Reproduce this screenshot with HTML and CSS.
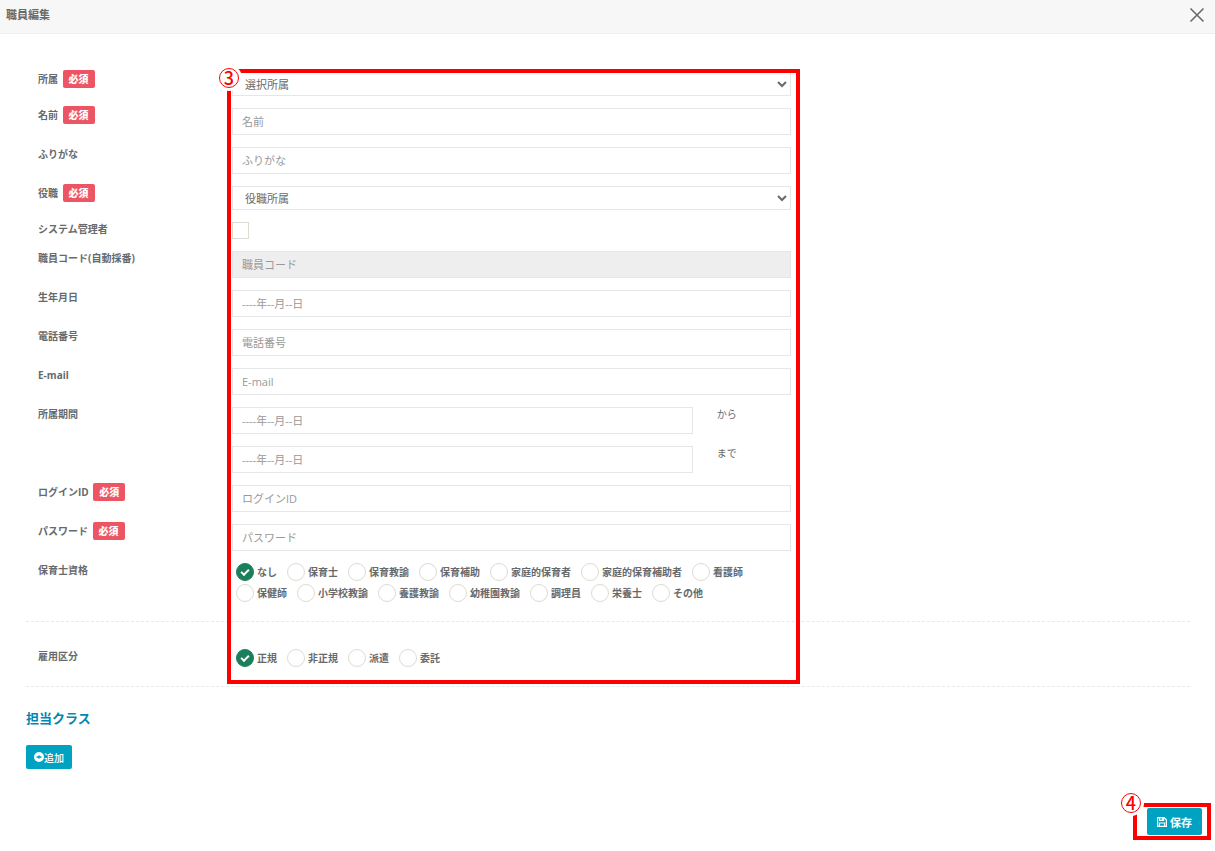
FILE: index.html
```html
<!DOCTYPE html>
<html lang="ja">
<head>
    <meta charset="UTF-8">
    <meta name="viewport" content="width=device-width, initial-scale=1.0">
    <title>職員編集</title>
    <link rel="stylesheet" href="styles.css">
</head>
<body>
    <header class="modal-header">
        <h1>職員編集</h1>
        <button type="button" class="close" aria-label="閉じる">
            <svg width="16" height="16" viewBox="0 0 16 16"><path d="M1.5 1.5l13 13M14.5 1.5l-13 13" fill="none" stroke="currentColor" stroke-width="1.6"/></svg>
        </button>
    </header>

    <form class="modal-body">
        <div class="form-grid">
            <label class="name" for="office">所属 <span class="required">必須</span></label>
            <select class="field" id="office"><option>選択所属</option></select>

            <label class="name" for="name">名前 <span class="required">必須</span></label>
            <input class="field" type="text" id="name" placeholder="名前">

            <label class="name" for="kana">ふりがな</label>
            <input class="field" type="text" id="kana" placeholder="ふりがな">

            <label class="name" for="position">役職 <span class="required">必須</span></label>
            <select class="field" id="position"><option>役職所属</option></select>

            <label class="name" for="admin">システム管理者</label>
            <input class="check" type="checkbox" id="admin">

            <label class="name" for="code">職員コード(自動採番)</label>
            <input class="field" type="text" id="code" placeholder="職員コード" disabled>

            <label class="name" for="birthday">生年月日</label>
            <input class="field" type="text" id="birthday" placeholder="----年--月--日">

            <label class="name" for="tel">電話番号</label>
            <input class="field" type="text" id="tel" placeholder="電話番号">

            <label class="name" for="email">E-mail</label>
            <input class="field" type="email" id="email" placeholder="E-mail">

            <label class="name" for="from">所属期間</label>
            <div class="period">
                <input class="field" type="text" id="from" placeholder="----年--月--日">
                <label for="from">から</label>
            </div>
            <div class="period">
                <input class="field" type="text" id="to" placeholder="----年--月--日">
                <label for="to">まで</label>
            </div>

            <label class="name" for="login">ログインID <span class="required">必須</span></label>
            <input class="field" type="text" id="login" placeholder="ログインID">

            <label class="name" for="password">パスワード <span class="required">必須</span></label>
            <input class="field" type="password" id="password" placeholder="パスワード">

            <span class="name" id="license-label">保育士資格</span>
            <div class="radios" role="radiogroup" aria-labelledby="license-label">
                <label><input type="radio" name="license" checked>なし</label>
                <label><input type="radio" name="license">保育士</label>
                <label><input type="radio" name="license">保育教諭</label>
                <label><input type="radio" name="license">保育補助</label>
                <label><input type="radio" name="license">家庭的保育者</label>
                <label><input type="radio" name="license">家庭的保育補助者</label>
                <label><input type="radio" name="license">看護師</label>
                <label><input type="radio" name="license">保健師</label>
                <label><input type="radio" name="license">小学校教諭</label>
                <label><input type="radio" name="license">養護教諭</label>
                <label><input type="radio" name="license">幼稚園教諭</label>
                <label><input type="radio" name="license">調理員</label>
                <label><input type="radio" name="license">栄養士</label>
                <label><input type="radio" name="license">その他</label>
            </div>

            <hr>

            <span class="name" id="contract-label">雇用区分</span>
            <div class="radios" role="radiogroup" aria-labelledby="contract-label">
                <label><input type="radio" name="contract" checked>正規</label>
                <label><input type="radio" name="contract">非正規</label>
                <label><input type="radio" name="contract">派遣</label>
                <label><input type="radio" name="contract">委託</label>
            </div>

            <!-- step 3 callout -->
            <div class="callout callout-form"><span class="step">3</span></div>
        </div>
        <hr>

        <h2>担当クラス</h2>
        <button type="button" class="btn btn-add">
            <svg width="10" height="10" viewBox="0 0 10 10"><circle cx="5" cy="5" r="5" fill="#fff"/><path d="M2.5 5h5M5 3.5v3" stroke="#00a2c2" stroke-width="1.6"/></svg>追加
        </button>

        <div class="actions">
            <div class="save">
                <button type="submit" class="btn btn-save">
                    <svg width="10" height="10" viewBox="0 0 10 10" fill="none" stroke="#fff" stroke-width="1.2"><path d="M.6.6h6.6l2.2 2.2v6.6H.6z"/><path d="M2.6.6v2.8h4V.6M2.4 9.4V6h5.2v3.4M5.4 1v1.6"/></svg>
                    保存
                </button>
                <!-- step 4 callout -->
                <div class="callout callout-save"><span class="step">4</span></div>
            </div>
        </div>
    </form>
</body>
</html>
```

FILE: styles.css
```css
* {
    box-sizing: border-box;
}
body {
    margin: 0;
    background: #fff;
    color: #676a6c;
    font-family: "Open Sans", "Noto Sans CJK JP", sans-serif;
    font-size: 10px;
    line-height: 14px;
}
.modal-header {
    display: flex;
    justify-content: space-between;
    align-items: center;
    height: 34px;
    padding: 0 10px 4px 6px;
    background: #f7f7f7;
    border-bottom: 1px solid #eee;
}
h1 {
    margin: 0;
    font-size: 11px;
    font-weight: 600;
}
.close {
    display: flex;
    padding: 0;
    border: none;
    background: none;
    color: #676a6c;
    cursor: pointer;
}
.modal-body {
    padding: 38px 25px 0 26px;
}
.form-grid {
    position: relative;
    display: grid;
    grid-template-columns: 206px minmax(0, 7fr) minmax(0, 5fr);
    row-gap: 12px;
    align-items: start;
}
.name {
    grid-column: 1;
    padding-left: 12px;
    font-weight: 700;
}
.required {
    margin-left: 2px;
    padding: 2px 6px;
    border-radius: 2px;
    background: #ed5565;
    color: #fff;
    font-weight: 900;
}
.form-grid > .field,
.check,
.period,
.radios {
    grid-column: 2;
}
.field {
    width: 100%;
    height: 27px;
    padding: 0 9px;
    border: 1px solid #e5e6e7;
    border-radius: 0;
    background: #fff;
    color: #676a6c;
    font-family: inherit;
    font-size: 11px;
}
.field::placeholder {
    color: #999;
    opacity: 1;
}
.field:disabled {
    background: #eee;
}
select.field {
    height: 24px;
    padding: 0 4px 0 8px;
}
.check {
    appearance: none;
    width: 17px;
    height: 17px;
    margin: 0;
    border: 1px solid #dedbd3;
}
.check:checked {
    background: #1c7f5c;
}
.period {
    display: grid;
    grid-template-columns: minmax(0, 1fr) 74px;
    column-gap: 24px;
}
.radios {
    display: flex;
    flex-wrap: wrap;
    column-gap: 10px;
    padding-left: 4px;
    font-weight: 700;
}
.radios label {
    display: flex;
    align-items: flex-start;
    gap: 3px;
    height: 21px;
    line-height: 18px;
}
.radios input {
    appearance: none;
    display: flex;
    align-items: center;
    justify-content: center;
    width: 18px;
    height: 18px;
    margin: 0;
    border: 1px solid #dedbd3;
    border-radius: 50%;
}
.radios input:checked {
    border-color: #1c7f5c;
    background: #1c7f5c;
}
.radios input:checked::after {
    content: "";
    box-sizing: border-box;
    width: 8px;
    height: 5px;
    margin-bottom: 2px;
    border: solid #fff;
    border-width: 0 0 2px 2px;
    transform: rotate(-45deg);
}
hr {
    width: 100%;
    height: 1px;
    margin: 16px 0 22px;
    border: none;
    border-top: 1px dashed #e7eaec;
}
.form-grid hr {
    grid-column: 1 / -1;
    margin: 4px 0 15px;
}
h2 {
    margin: 0 0 18px;
    color: #0088b3;
    font-size: 13px;
    line-height: 18px;
    font-weight: 600;
}
.btn {
    display: flex;
    align-items: center;
    justify-content: center;
    border: none;
    border-radius: 2px;
    background: #00a2c2;
    color: #fff;
    font-family: inherit;
    cursor: pointer;
}
.btn-add {
    height: 24px;
    padding: 0 8px;
    font-size: 10px;
    font-weight: 500;
}
.actions {
    display: flex;
    justify-content: flex-end;
    padding: 39px 0 16px;
    margin-right: -12px;
}
.save {
    position: relative;
}
.btn-save {
    gap: 3px;
    height: 27px;
    padding: 0 10px;
    font-size: 11px;
    font-weight: 700;
}
.callout {
    position: absolute;
    border: 4px solid #f00;
    pointer-events: none;
}
.callout-form {
    grid-column: 2 / 3;
    inset: -3px -9px -14px -5px;
}
.callout-save {
    inset: -5px -9px -5px -14px;
}
.step {
    position: absolute;
    top: -5px;
    left: -12px;
    width: 20px;
    height: 20px;
    border: 1px solid #f00;
    border-radius: 50%;
    box-shadow: 0 0 0 3px #fff;
    background: #fff;
    color: #f00;
    font-family: "Noto Sans CJK JP", sans-serif;
    font-size: 18px;
    font-weight: 500;
    line-height: 17px;
    text-align: center;
}
.callout-save .step {
    top: -14px;
    left: -16px;
}
```
